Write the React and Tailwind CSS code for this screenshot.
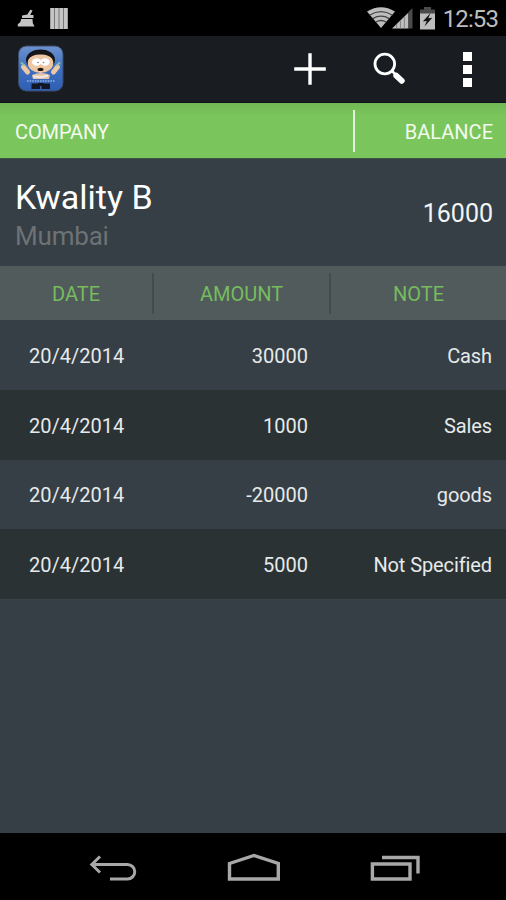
import { useState } from 'react';

const TRANSACTIONS = [
  { id: 1, date: '20/4/2014', amount: '30000', note: 'Cash' },
  { id: 2, date: '20/4/2014', amount: '1000', note: 'Sales' },
  { id: 3, date: '20/4/2014', amount: '-20000', note: 'goods' },
  { id: 4, date: '20/4/2014', amount: '5000', note: 'Not Specified' },
]

function StatusBar() {
  return (
    <div className="flex h-9 shrink-0 items-center bg-black pl-[17px] pr-2">
      {/* cleaner */}
      <svg width="18" height="18" viewBox="0 0 18 18" fill="#c4c4c4">
        <path d="M13.3 0.8 L15.6 1.6 L13.2 6 H16.5 V9 H5 V6.6 L10.4 5.4 Z" />
        <path d="M4 10 H15.5 Q15 13.5 17.5 17.5 H0.8 V15 Q4 13.5 4 10 Z" />
      </svg>
      {/* barcode */}
      <svg className="ml-[15px]" width="18" height="21" viewBox="0 0 18 21">
        <path fill="#777" d="M0 0H18V21H0Z" />
        <path fill="#c6c6c6" d="M0.5 0H4V21H0.5Z M5 0H8.5V21H5Z M9.5 0H13V21H9.5Z M14 0H17.5V21H14Z" />
      </svg>

      <div className="ml-auto flex items-center">
        {/* wifi */}
        <svg width="28" height="22" viewBox="0 0 28 22">
          <path fill="#bdbdbd" d="M0 4.5 Q14 -4 28 4.5 L14 21 Z" />
          <path fill="none" stroke="#444" strokeWidth="1.3" d="M2.5 8.2 Q14 1.2 25.5 8.2 M5.8 11.6 Q14 6.8 22.2 11.6 M8.8 15 Q14 12 19.2 15" />
        </svg>
        {/* signal */}
        <svg className="-ml-[3px]" width="21" height="22" viewBox="0 0 21 22">
          <path fill="#bdbdbd" d="M0 21.5 L16.5 5.5 V21.5 Z" />
          <path fill="#4a4a4a" d="M16.5 5 L20.5 1 V21.5 H16.5 Z" />
          <path stroke="#777" strokeWidth="0.8" d="M4.6 17V22 M8.5 13V22 M12.4 9V22" />
        </svg>
        {/* battery */}
        <svg className="ml-[6px]" width="17" height="24" viewBox="0 0 17 24">
          <path fill="#4a4a4a" d="M5 1H12V3.5H16V9H1V3.5H5Z" />
          <path fill="#bdbdbd" d="M1 7.5H16V23.5H1Z" />
          <path fill="#111" d="M11.5 7 L3.8 15.5 L7.8 15 L5.5 20.5 L13.3 11.8 L9.3 12.3 Z" />
        </svg>
        <span className="ml-[7px] pt-0.5 text-[24px] leading-8 tracking-[-0.9px] text-[#bdbdbd]">12:53</span>
      </div>
    </div>
  )
}

function AppIcon() {
  return (
    <svg width="46" height="48" viewBox="0 0 46 48">
      <defs>
        <linearGradient id="iconBg" x1="0" y1="0" x2="0" y2="1">
          <stop offset="0" stopColor="#6d93cf" />
          <stop offset="0.5" stopColor="#3e6fc0" />
          <stop offset="1" stopColor="#2e5fb4" />
        </linearGradient>
      </defs>
      <rect x="0.5" y="1" width="44.5" height="45" rx="8" fill="url(#iconBg)" stroke="#3a4b68" />
      {/* arms */}
      <path stroke="#ecc8a4" strokeWidth="5" strokeLinecap="round" d="M5.5 22 L9.5 27 M39.5 22 L35.5 27" />
      <path stroke="#86bdb4" strokeWidth="2" strokeLinecap="round" d="M3.5 18 L6 20 M41.5 18L39 20" />
      <path fill="#e2c4ae" d="M14 30 Q23 26 32 30 L31 34 H15 Z" />
      {/* head */}
      <ellipse cx="22.5" cy="15" rx="14.5" ry="10.5" fill="#15151a" />
      <ellipse cx="22.5" cy="18" rx="12.8" ry="10" fill="#edc7a4" />
      <path fill="#15151a" d="M9.5 14.5 Q10 5 22.5 5 Q35 5 35.5 14.5 Q30 9 22.5 9.5 Q15 9 9.5 14.5Z" />
      <ellipse cx="18.6" cy="17" rx="4.6" ry="3.8" fill="#fff" />
      <ellipse cx="27" cy="17" rx="4.6" ry="3.8" fill="#fff" />
      <circle cx="20" cy="17.5" r="0.8" fill="#777" />
      <circle cx="25.5" cy="17.5" r="0.8" fill="#777" />
      <ellipse cx="22.5" cy="24.4" rx="3" ry="1.7" fill="#241414" />
      <path stroke="#f3e7df" strokeWidth="2" d="M15 31.5 L24 32 L30 30.5" fill="none" />
      <path stroke="#8fb0e2" strokeWidth="1.6" strokeDasharray="1.6 1" d="M9 36 H37" />
      <path fill="#131722" d="M13.5 38.5 H22 V44 H13.5Z M23.5 38.5 H32 V44 H23.5Z M20 38 H26 V41 H20Z" />
    </svg>
  )
}

function ActionBar() {
  return (
    <div className="flex h-[67px] shrink-0 items-center border-b border-[#10111c] bg-[#191c20] pl-[18px]">
      <AppIcon />
      {/* add */}
      <svg className="ml-auto" width="34" height="34" viewBox="0 0 34 34">
        <path stroke="#fff" strokeWidth="3.4" d="M17 1.2V32.8 M1.2 17H32.8" />
      </svg>
      {/* search */}
      <svg className="ml-[46px]" width="34" height="34" viewBox="0 0 34 34">
        <circle cx="11.8" cy="12" r="9.8" fill="none" stroke="#fff" strokeWidth="2.8" />
        <path stroke="#fff" strokeWidth="2.5" d="M18.5 18.5L23 23" />
        <path stroke="#fff" strokeWidth="5.8" strokeLinecap="round" d="M23.2 23.6L28.8 28.8" />
      </svg>
      {/* overflow */}
      <div className="ml-[56px] mr-[34px] flex flex-col gap-1">
        <span className="size-[9px] bg-white" />
        <span className="size-[9px] bg-white" />
        <span className="size-[9px] bg-white" />
      </div>
    </div>
  )
}

function NavBar() {
  return (
    <div className="flex h-[67px] shrink-0 items-center justify-between bg-black pl-[89px] pr-[85px] pt-[3px]">
      <svg width="49" height="30" viewBox="0 0 49 30" fill="none" stroke="#a8a8a8" strokeWidth="3">
        <path d="M3 11.5H38.5A7 7 0 0 1 38.5 26H21" />
        <path d="M11 3.5L2.8 11.5L11 19.5" />
      </svg>
      <svg width="54" height="30" viewBox="0 0 54 30" fill="none" stroke="#a8a8a8" strokeWidth="3.4">
        <path d="M2.5 10.5L27 2.5L51.3 10.5V26H2.5Z" />
      </svg>
      <svg width="51" height="30" viewBox="0 0 51 30" fill="none" stroke="#a8a8a8" strokeWidth="3.4">
        <path d="M2.4 11H40V26H2.4Z" />
        <path d="M12 4.5H48V20.5" />
      </svg>
    </div>
  )
}

export default function App() {
  const [transactions] = useState(TRANSACTIONS)

  return (
    <div className="flex h-[900px] w-[506px] flex-col overflow-hidden bg-[#363f45] font-['Roboto',sans-serif]">
      <StatusBar />
      <ActionBar />

      {/* company / balance */}
      <div className="flex h-[55px] shrink-0 items-center bg-linear-to-b from-[#72b955] to-[#7bc65c] to-25% text-[20px] text-[#f3faef]">
        <span className="flex-1 pl-[15px] pt-[2px] tracking-[-0.1px]">COMPANY</span>
        <div className="h-[42px] w-[2px] bg-[#e4f3dd]" />
        <span className="w-[151px] pr-[13px] pt-[2px] text-right">BALANCE</span>
      </div>
      <div className="flex h-[108px] shrink-0 items-center justify-between border-t border-[#3f5047] pl-[15px] pr-[13px] pt-1">
        <div className="pt-[2px]">
          <h1 className="text-[34px] leading-[41px] text-white">Kwality B</h1>
          <p className="text-[26px] leading-9 tracking-[-0.2px] text-[#6d7275]">Mumbai</p>
        </div>
        <span className="pb-[2px] text-[25px] text-[#f2f5f6]">16000</span>
      </div>

      {/* table */}
      <div className="flex h-[54px] shrink-0 items-center bg-[#515b5c] pt-px text-center text-[20px] text-[#76bb5e]">
        <span className="w-[152px]">DATE</span>
        <div className="h-[41px] w-[2px] bg-[#424b4d]" />
        <span className="w-[175px]">AMOUNT</span>
        <div className="h-[41px] w-[2px] bg-[#424b4d]" />
        <span className="flex-1">NOTE</span>
      </div>
      {transactions.map((item) => (
        <div key={item.id} className="flex h-[69.8px] shrink-0 items-center pl-[29px] pr-[14px] pt-[2px] text-[20px] text-[#e6eaeb] odd:bg-[#2b3234] even:bg-[#363f45]">
          <span className="w-[119px]">{item.date}</span>
          <span className="w-[160px] text-right">{item.amount}</span>
          <span className="flex-1 text-right tracking-[-0.1px]">{item.note}</span>
        </div>
      ))}

      <div className="flex-1 border-t border-[#3a4347]" />
      <NavBar />
    </div>
  )
}
